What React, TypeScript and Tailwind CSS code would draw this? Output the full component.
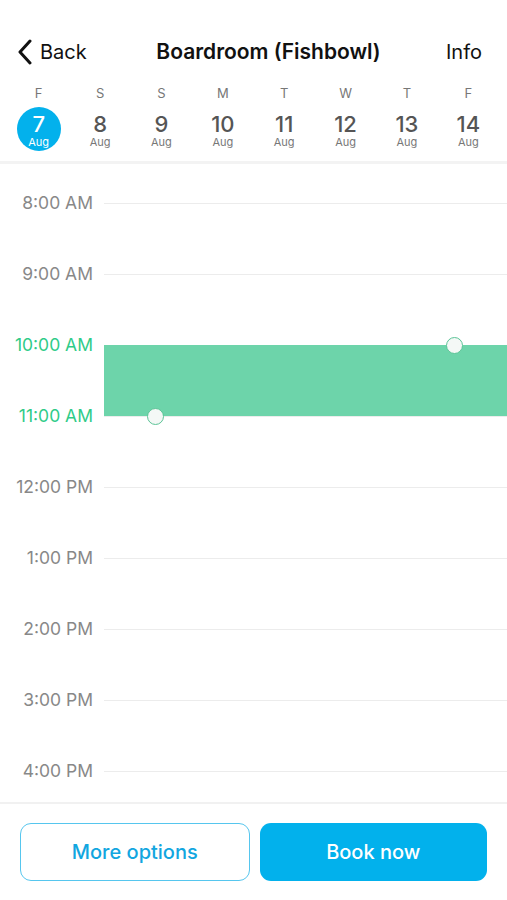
import React from "react";

const days = [
  { l: "F", d: "7" },
  { l: "S", d: "8" },
  { l: "S", d: "9" },
  { l: "M", d: "10" },
  { l: "T", d: "11" },
  { l: "W", d: "12" },
  { l: "T", d: "13" },
  { l: "F", d: "14" },
];

const hours = [
  "8:00 AM",
  "9:00 AM",
  "10:00 AM",
  "11:00 AM",
  "12:00 PM",
  "1:00 PM",
  "2:00 PM",
  "3:00 PM",
  "4:00 PM",
];

export default function App() {
  return (
    <div
      className="w-[507px] h-[900px] bg-white flex flex-col overflow-hidden"
      style={{ fontFamily: "Inter, 'Liberation Sans', sans-serif" }}
    >
      {/* Nav */}
      <div className="h-[30px]" />
      <div className="h-[44px] flex items-center justify-between px-[16px] relative">
        <div className="flex items-center gap-[6px] text-[20px] text-[#111]">
          <svg width="18" height="26" viewBox="0 0 18 26" fill="none">
            <path d="M14 2 L4 13 L14 24" stroke="#111" strokeWidth="3" strokeLinecap="round" strokeLinejoin="round" />
          </svg>
          <span>Back</span>
        </div>
        <div className="absolute left-[30px] right-0 text-center text-[21px] font-semibold text-[#111] pointer-events-none">
          Boardroom (Fishbowl)
        </div>
        <div className="text-[20px] text-[#111] pr-[9px]">Info</div>
      </div>
      {/* Days */}
      <div className="px-[8px] grid grid-cols-8 pt-[11px] pb-[10px]">
        {days.map((d, i) => (
          <div key={i} className="flex flex-col items-center">
            <div className="text-[13px] text-[#777] leading-[16px] h-[16px]">{d.l}</div>
            <div
              className={`mt-[6px] w-[44px] h-[44px] rounded-full flex flex-col items-center pt-[5px] ${
                i === 0 ? "bg-[#03b1ec] text-white" : "text-[#555]"
              }`}
            >
              <div className="text-[22px] leading-[24px] font-medium">{d.d}</div>
              <div className={`text-[11px] leading-[12px] ${i === 0 ? "text-white" : "text-[#777]"}`}>Aug</div>
            </div>
          </div>
        ))}
      </div>
      <div className="h-[3px] bg-[#f3f3f3]" />
      {/* Timeline */}
      <div className="flex-1 relative overflow-hidden pt-[4px]">
        {hours.map((h, i) => {
          const green = i === 2 || i === 3;
          return (
            <div key={h} className="h-[71px] flex items-center">
              <div
                className={`w-[93px] text-right text-[17.5px] ${green ? "text-[#2fcb88]" : "text-[#888]"}`}
              >
                {h}
              </div>
              <div className="ml-[11px] flex-1 h-[1px] bg-[#ececec]" />
            </div>
          );
        })}
        <div className="absolute left-[104px] right-0 top-[181px] h-[71px] bg-[#6dd4aa]" />
        <div className="absolute left-[446px] top-[173px] w-[17px] h-[17px] rounded-full bg-[#f4f8f6] border-[1.5px] border-[#5cc497]" />
        <div className="absolute left-[147px] top-[244px] w-[17px] h-[17px] rounded-full bg-[#f4f8f6] border-[1.5px] border-[#5cc497]" />
      </div>
      {/* Bottom */}
      <div className="h-[98px] border-t-[2px] border-[#f1f1f1] flex gap-[10px] px-[20px] pt-[19px] bg-white">
        <div className="flex-1 h-[58px] rounded-[11px] border-[1.5px] border-[#56c6ee] flex items-center justify-center text-[20px] font-medium text-[#12a6e0]">
          More options
        </div>
        <div className="flex-1 h-[58px] rounded-[11px] bg-[#02b1ec] flex items-center justify-center text-[20px] font-medium text-white">
          Book now
        </div>
      </div>
    </div>
  );
}
